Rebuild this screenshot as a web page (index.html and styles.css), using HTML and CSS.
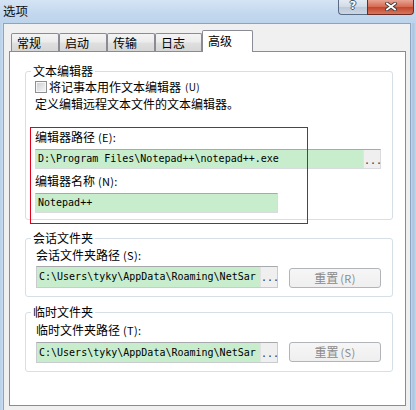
FILE: index.html
```html
<!DOCTYPE html>
<html>
<head>
<meta charset="utf-8">
<title>选项</title>
<link rel="stylesheet" href="styles.css">
</head>
<body>
<div class="window">
  <div class="titlebar">
    <span class="title">选项</span>
    <div class="caption">
      <div class="cbtn help"><span class="qm">?</span></div>
      <div class="cbtn close">
        <svg width="12" height="9" viewBox="0 0 12 9">
          <path d="M2 1.5 L10 7.5 M10 1.5 L2 7.5" stroke="#3b3b3b" stroke-width="3.6" stroke-linecap="square" fill="none"/>
          <path d="M2 1.5 L10 7.5 M10 1.5 L2 7.5" stroke="#ffffff" stroke-width="1.8" stroke-linecap="square" fill="none"/>
        </svg>
      </div>
    </div>
  </div>
  <div class="client">
    <div class="tabs">
      <div class="tab w48">常规</div>
      <div class="tab w48">启动</div>
      <div class="tab w48">传输</div>
      <div class="tab w47">日志</div>
      <div class="tab active">高级</div>
    </div>
    <div class="panel">
      <fieldset class="group g1">
        <legend>文本编辑器</legend>
        <div class="gbody b1">
          <div class="check"><span class="box"></span>将记事本用作文本编辑器<span class="hk hk-u">(U)</span></div>
          <div class="desc">定义编辑远程文本文件的文本编辑器。</div>
          <div class="lbl lbl-path">编辑器路径<span class="hk">(E):</span></div>
          <div class="field f-path"><span class="val">D:\Program Files\Notepad++\notepad++.exe</span><span class="dots">...</span></div>
          <div class="lbl lbl-name">编辑器名称<span class="hk">(N):</span></div>
          <div class="field f-name"><span class="val">Notepad++</span></div>
        </div>
      </fieldset>
      <fieldset class="group g2">
        <legend>会话文件夹</legend>
        <div class="gbody b2">
          <div class="lbl">会话文件夹路径<span class="hk">(S):</span></div>
          <div class="row r2">
            <div class="field f-dir"><span class="val">C:\Users\tyky\AppData\Roaming\NetSar</span><span class="dots">...</span></div>
            <div class="reset">重置<span class="hk">(R)</span></div>
          </div>
        </div>
      </fieldset>
      <fieldset class="group g3">
        <legend>临时文件夹</legend>
        <div class="gbody b3">
          <div class="lbl">临时文件夹路径<span class="hk">(T):</span></div>
          <div class="row r3">
            <div class="field f-dir f-tmp"><span class="val">C:\Users\tyky\AppData\Roaming\NetSar</span><span class="dots">...</span></div>
            <div class="reset">重置<span class="hk">(S)</span></div>
          </div>
        </div>
      </fieldset>
      <div class="mark"></div>
    </div>
  </div>
</div>
</body>
</html>
```
FILE: styles.css
```css
* { box-sizing: border-box; }
html, body { margin: 0; padding: 0; }
body {
  width: 416px;
  height: 410px;
  overflow: hidden;
  font-family: "Noto Sans CJK SC", "Noto Sans", sans-serif;
  font-size: 12px;
  color: #000;
  background: linear-gradient(90deg, #b9d0ea 0, #c9dcf0 3px, #c6daef 411px, #aac3df 413px, #c3d7ee 416px);
}
.window {
  height: 410px;
  display: flex;
  flex-direction: column;
}
.titlebar {
  flex: none;
  height: 23px;
  display: flex;
  align-items: flex-start;
  background: linear-gradient(#d4e4f5, #c3d8ee 60%, #bcd3eb);
}
.title {
  margin: 3px 0 0 3px;
  font-size: 12.5px;
  line-height: 16px;
  color: #111;
}
.caption {
  margin-left: auto;
  margin-right: 2px;
  display: flex;
}
.cbtn {
  height: 15px;
  display: flex;
  align-items: center;
  justify-content: center;
}
.help {
  width: 29px;
  border: 1px solid #5a6c84;
  border-top: none;
  border-right: none;
  border-radius: 0 0 0 4px;
  background: linear-gradient(#e4eaf2, #d0dae6 50%, #bcc9d8 51%, #ccd7e4);
}
.qm {
  font-family: "DejaVu Sans", sans-serif;
  font-weight: bold;
  font-size: 11px;
  line-height: 11px;
  color: #fff;
  margin-top: -3px;
  text-shadow: 1px 0 0 #45556a, -1px 0 0 #45556a, 0 1px 0 #45556a, 0 -1px 0 #45556a;
}
.close {
  width: 47px;
  border: 1px solid #6b2b24;
  border-top: none;
  border-radius: 0 0 4px 0;
  background: linear-gradient(#e9a494, #d5694f 50%, #c3442c 51%, #d5775d);
}
.close svg { display: block; margin-top: -2px; }

.client {
  flex: 1;
  margin: 0 5px 0 3px;
  background: #f0f0f0;
  border: 1px solid #8ea3bd;
  border-bottom: none;
  padding: 7px 4px 0 5px;
  display: flex;
  flex-direction: column;
}
.tabs {
  display: flex;
  align-items: flex-end;
  height: 20px;
  margin-left: 2px;
}
.tab {
  height: 18px;
  border: 1px solid #898c95;
  border-bottom: none;
  padding-left: 5px;
  line-height: 17px;
  background: linear-gradient(#f4f4f4, #ececec 45%, #dfdfdf 55%, #d6d6d6);
  border-radius: 2px 2px 0 0;
}
.w48 { width: 48px; }
.w47 { width: 47px; }
.tab.active {
  width: 51px;
  height: 22px;
  margin-bottom: -1px;
  position: relative;
  z-index: 1;
  background: #fff;
  line-height: 20px;
}
.panel {
  position: relative;
  height: 355px;
  border: 1px solid #898c95;
  background: #fff;
  padding: 12px 0 0 15px;
}

.group {
  margin: 0;
  padding: 0;
  width: 368px;
  min-width: 0;
  border: 1px solid #d5dfe5;
  border-radius: 3px;
}
.group legend {
  margin-left: 5px;
  padding: 0 2px;
  font-size: 12px;
  line-height: 14px;
}
.g2 { margin-top: 11px; }
.g3 { margin-top: 8px; }
.gbody { line-height: 14px; }
.b1 { padding: 1px 0 6px 9px; }
.b2 { padding: 3px 0 8px 10px; }
.b3 { padding: 4px 0 8px 10px; }

.hk {
  font-size: 11px;
  margin-left: 3px;
  letter-spacing: 0.3px;
}
.hk-u { margin-left: 4px; font-size: 10px; }

.check {
  display: flex;
  align-items: center;
  height: 16px;
  line-height: 16px;
}
.box {
  width: 12px;
  height: 12px;
  margin-right: 2px;
  border: 1px solid #8e8f8f;
  box-shadow: inset 0 0 0 1px #f6f6f6;
  background: linear-gradient(135deg, #c8ccd2, #e6e7e9 60%, #f6f6f6);
}
.desc {
  margin-top: 1px;
  line-height: 16px;
}
.lbl-path { margin-top: 18px; }
.lbl-name { margin-top: 5px; }

.field {
  display: flex;
  align-items: center;
  height: 20px;
  margin-top: 5px;
  border: 1px solid #d9dbde;
  border-top-color: #a7a9ad;
  background: #c7edcc;
}
.val {
  flex: 1;
  padding-left: 2px;
  font-family: "DejaVu Sans Mono", "Liberation Mono", monospace;
  font-size: 10px;
  line-height: 14px;
  white-space: nowrap;
  overflow: hidden;
  color: #000;
}
.dots {
  align-self: stretch;
  width: 17px;
  background: #efefef;
  border-left: 1px solid #e2e2e2;
  font-family: "DejaVu Sans Mono", monospace;
  font-size: 10px;
  line-height: 22px;
  text-align: center;
  color: #333;
}
.f-path { width: 346px; }
.f-name { width: 243px; }
.f-dir {
  width: 242px;
  height: 22px;
  margin-top: 0;
  border-color: #c9cbcf;
  border-top-color: #a7a9ad;
}
.f-tmp { height: 21px; }
.f-dir .val { padding-left: 2px; }

.row {
  display: flex;
  margin-top: 4px;
}
.r2 { align-items: flex-end; }
.r3 { align-items: flex-start; margin-top: 5px; }
.reset {
  width: 92px;
  height: 20px;
  margin-left: 11px;
  border: 1px solid #b1b5b9;
  border-radius: 3px;
  background: linear-gradient(#f6f6f6, #efefef);
  color: #8a8a8a;
  text-align: center;
  line-height: 18px;
}
.reset .hk { margin-left: 2px; }

.mark {
  position: absolute;
  left: 20px;
  top: 75px;
  width: 278px;
  height: 97px;
  border: 1px solid #e5001a;
}
```
